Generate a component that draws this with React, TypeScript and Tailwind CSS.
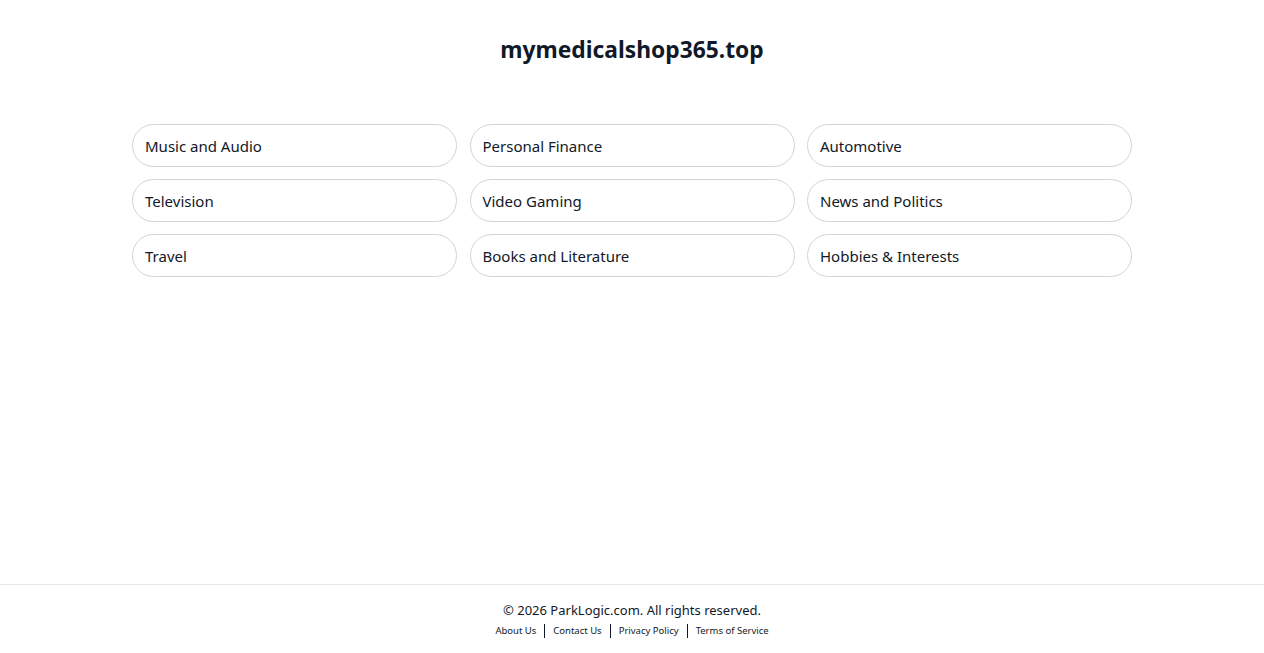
const categories = [
  "Music and Audio",
  "Personal Finance",
  "Automotive",
  "Television",
  "Video Gaming",
  "News and Politics",
  "Travel",
  "Books and Literature",
  "Hobbies & Interests",
];

const links = ["About Us", "Contact Us", "Privacy Policy", "Terms of Service"];

export default function App() {
  return (
    <div className="min-h-screen flex flex-col bg-white text-[#111827] font-['Noto_Sans','Open_Sans',sans-serif]">
      <main className="flex-1">
        <h1 className="text-center text-[22.8px] font-bold leading-8 pt-[34px]">mymedicalshop365.top</h1>

        <div className="mx-auto mt-[58px] grid w-[1000px] grid-cols-3 gap-x-[12.5px] gap-y-[12px]">
          {categories.map((c) => (
            <a
              key={c}
              href="#"
              className="flex h-[43px] items-center rounded-full border border-[#d4d4d8] px-[12px] pt-[1px] text-[15px] text-[#111827]"
            >
              {c}
            </a>
          ))}
        </div>
      </main>

      <footer className="border-t border-[#e5e7eb] h-[69px] pt-[15px] text-center">
        <p className="text-[13px] leading-5">© 2026 ParkLogic.com. All rights reserved.</p>
        <div className="flex justify-center items-center mt-[4px] text-[10px]">
          {links.map((l, i) => (
            <span key={l} className="flex items-center">
              {i > 0 && <span className="mx-[8px] h-[14px] w-px bg-[#111827]" />}
              <a href="#" className="text-[9.5px]">{l}</a>
            </span>
          ))}
        </div>
      </footer>
    </div>
  );
}
